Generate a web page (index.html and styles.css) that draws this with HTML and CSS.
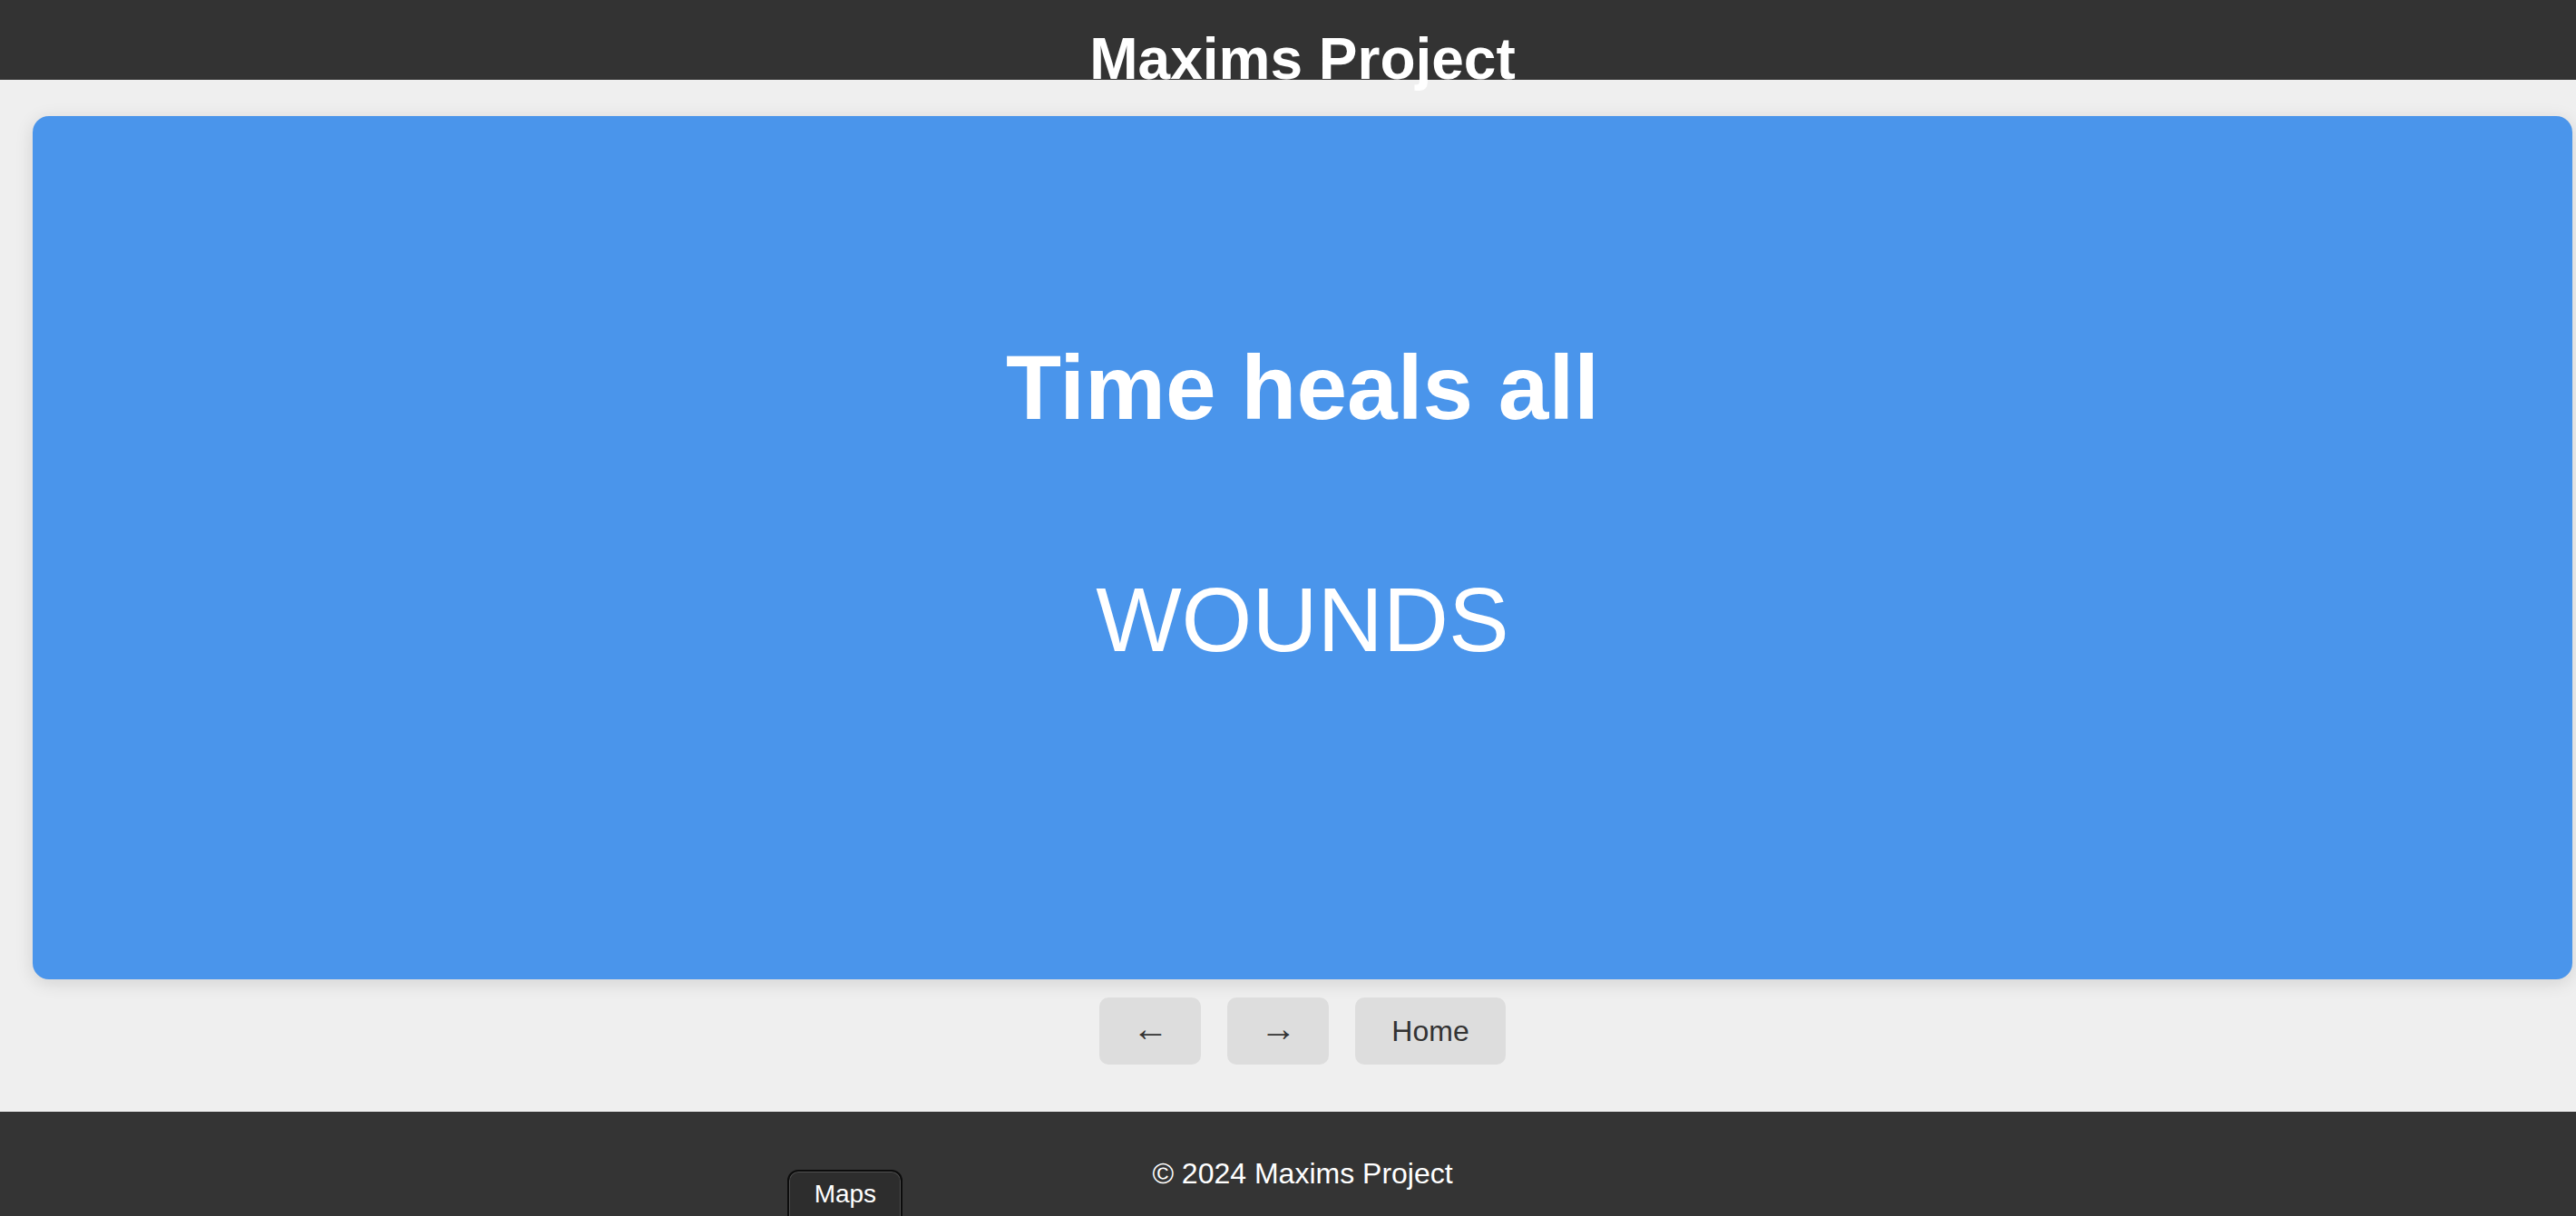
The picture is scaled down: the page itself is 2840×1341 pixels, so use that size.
FILE: index.html
```html
<!DOCTYPE html>
<html lang="en">
<head>
<meta charset="utf-8">
<title>Maxims Project</title>
<link rel="stylesheet" href="styles.css">
</head>
<body>
<div class="page">
  <header class="site-header">
    <h1 class="site-title">Maxims Project</h1>
  </header>
  <main class="main">
    <section class="card">
      <h2 class="maxim">Time heals all</h2>
      <p class="answer">WOUNDS</p>
    </section>
    <nav class="controls">
      <button class="btn btn-arrow">&larr;</button>
      <button class="btn btn-arrow">&rarr;</button>
      <button class="btn">Home</button>
    </nav>
  </main>
  <footer class="site-footer">
    <div class="footer-left"><button class="maps-btn">Maps</button></div>
    <p class="copyright">&copy; 2024 Maxims Project</p>
    <div class="footer-right"></div>
  </footer>
</div>
</body>
</html>
```
FILE: styles.css
```css
html, body {
  margin: 0;
  padding: 0;
  overflow: hidden;
  background: #efefef;
}
body {
  font-family: "Liberation Sans", Arial, Helvetica, sans-serif;
  color: #333;
}
.page {
  width: 2872px;
  min-height: 1341px;
  display: flex;
  flex-direction: column;
}
.site-header {
  height: 88px;
  background: #333333;
  text-align: center;
  position: relative;
  z-index: 2;
}
.site-title {
  margin: 0;
  padding-top: 29px;
  font-size: 64px;
  line-height: 72px;
  font-weight: bold;
  color: #ffffff;
}
.main {
  background: #efefef;
  padding: 40px 36px 52px;
  display: flex;
  flex-direction: column;
  align-items: center;
}
.card {
  box-sizing: border-box;
  width: 2800px;
  height: 952px;
  background: #4a95eb;
  border-radius: 18px;
  box-shadow: 0 4px 20px rgba(0, 0, 0, 0.12);
  padding-top: 242px;
  text-align: center;
  color: #ffffff;
}
.maxim {
  margin: 0 0 141px;
  font-size: 100px;
  line-height: 115px;
  font-weight: bold;
}
.answer {
  margin: 0;
  font-size: 100px;
  line-height: 115px;
  font-weight: normal;
}
.controls {
  margin-top: 20px;
  display: flex;
  gap: 29px;
}
.btn {
  font-family: "Liberation Sans", Arial, sans-serif;
  font-size: 32px;
  line-height: 34px;
  padding: 20px 40px;
  background: #dddddd;
  color: #333333;
  border: none;
  border-radius: 10px;
}
.btn-arrow {
  width: 112px;
  padding: 17px 0 23px;
  font-size: 40px;
}
.site-footer {
  flex: 1;
  background: #343434;
  display: grid;
  grid-template-columns: 1fr auto 1fr;
  align-items: start;
}
.footer-left {
  justify-self: end;
  margin-right: 275px;
  padding-top: 64px;
}
.maps-btn {
  font-family: "Liberation Sans", Arial, sans-serif;
  font-size: 28px;
  line-height: 32px;
  padding: 9px 26px 20px;
  width: 127px;
  background: #2d2d2d;
  color: #ffffff;
  border: 2px solid #0c0c0c;
  border-radius: 12px;
  box-shadow: inset 0 0 0 1px #4e4e4e;
}
.copyright {
  margin: 0;
  padding-top: 50px;
  font-size: 32px;
  line-height: 37px;
  color: #ffffff;
}
```
